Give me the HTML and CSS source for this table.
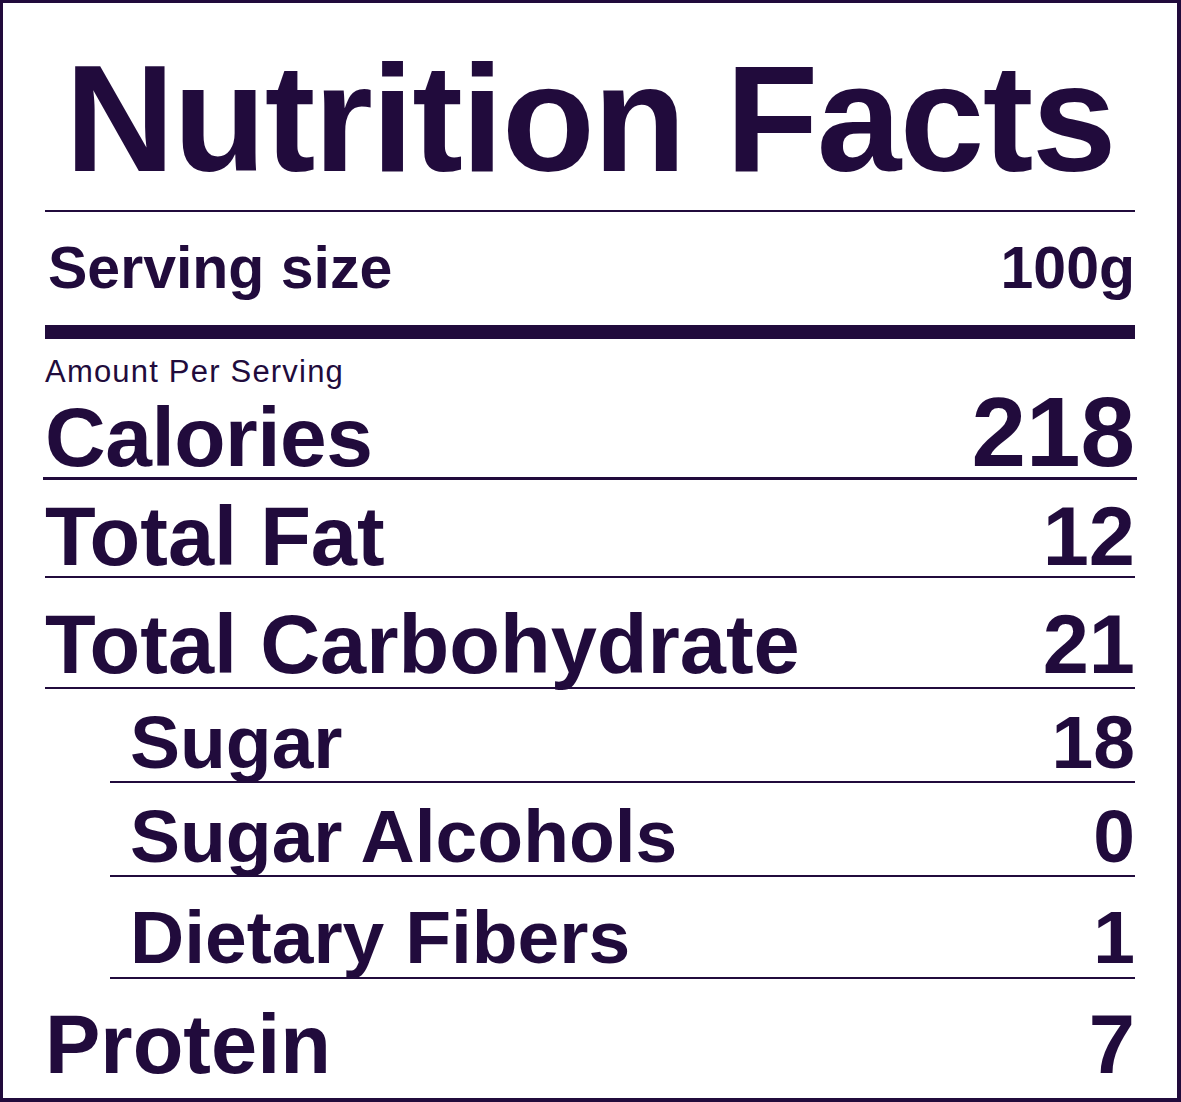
FILE: index.html
```html
<!DOCTYPE html>
<html lang="en">
<head>
  <meta charset="UTF-8" />
  <meta name="viewport" content="width=device-width, initial-scale=1.0"/>
  <title>Nutrition Facts</title>
  <link rel="stylesheet" href="styles.css">
</head>
<body>
  <div class="label">
    <h1 class="title">Nutrition Facts</h1>

    <div class="row serving">
      <span>Serving size</span>
      <span>100g</span>
    </div>

    <div class="amount">Amount Per Serving</div>

    <div class="row calories">
      <span class="cal-name">Calories</span>
      <span class="cal-value">218</span>
    </div>

    <div class="row main fat">
      <span>Total Fat</span>
      <span>12</span>
    </div>

    <div class="row main carb">
      <span>Total Carbohydrate</span>
      <span>21</span>
    </div>

    <div class="row sub sugar">
      <span>Sugar</span>
      <span>18</span>
    </div>

    <div class="row sub alcohols">
      <span>Sugar Alcohols</span>
      <span>0</span>
    </div>

    <div class="row sub fibers">
      <span>Dietary Fibers</span>
      <span>1</span>
    </div>

    <div class="row main protein">
      <span>Protein</span>
      <span>7</span>
    </div>
  </div>
</body>
</html>
```

FILE: styles.css
```css
body {
  margin: 0;
  font-family: "Liberation Sans", Arial, Helvetica, sans-serif;
  color: #210b3c;
  background: #fff;
}
.label {
  box-sizing: border-box;
  width: 1181px;
  height: 1102px;
  border: solid #210b3c;
  border-width: 3px 4px 4px 3px;
  padding: 0 42px;
}
.title {
  margin: 0;
  padding: 39px 0 16px;
  font-size: 152px;
  line-height: 152px;
  font-weight: bold;
  letter-spacing: -1.5px;
  text-align: center;
  border-bottom: 2px solid #210b3c;
}
.row {
  display: flex;
  justify-content: space-between;
  align-items: baseline;
  font-weight: bold;
}
.serving {
  padding: 27px 0 28px 3px;
  font-size: 59px;
  line-height: 58px;
  border-bottom: 14px solid #210b3c;
}
.amount {
  padding-top: 18px;
  font-size: 31px;
  line-height: 30px;
  letter-spacing: 1.2px;
}
.calories {
  margin: 0 -2px;
  padding: 5px 2px 0;
  height: 85px;
  line-height: 80px;
  border-bottom: 3px solid #210b3c;
}
.cal-name {
  font-size: 84px;
  letter-spacing: -0.5px;
}
.cal-value {
  font-size: 98px;
}
.main {
  font-size: 83px;
  line-height: 82px;
}
.sub {
  margin-left: 65px;
  padding-left: 20px;
  font-size: 75px;
  line-height: 74px;
  border-bottom: 2px solid #210b3c;
}
.fat {
  padding: 18px 0 0;
  line-height: 78px;
  border-bottom: 2px solid #210b3c;
}
.carb {
  padding: 26px 0 1px;
  border-bottom: 2px solid #210b3c;
}
.sugar,
.alcohols {
  padding-top: 16px;
  padding-bottom: 2px;
}
.fibers {
  padding-top: 23px;
  padding-bottom: 3px;
}
.protein {
  padding-top: 25px;
}
```
